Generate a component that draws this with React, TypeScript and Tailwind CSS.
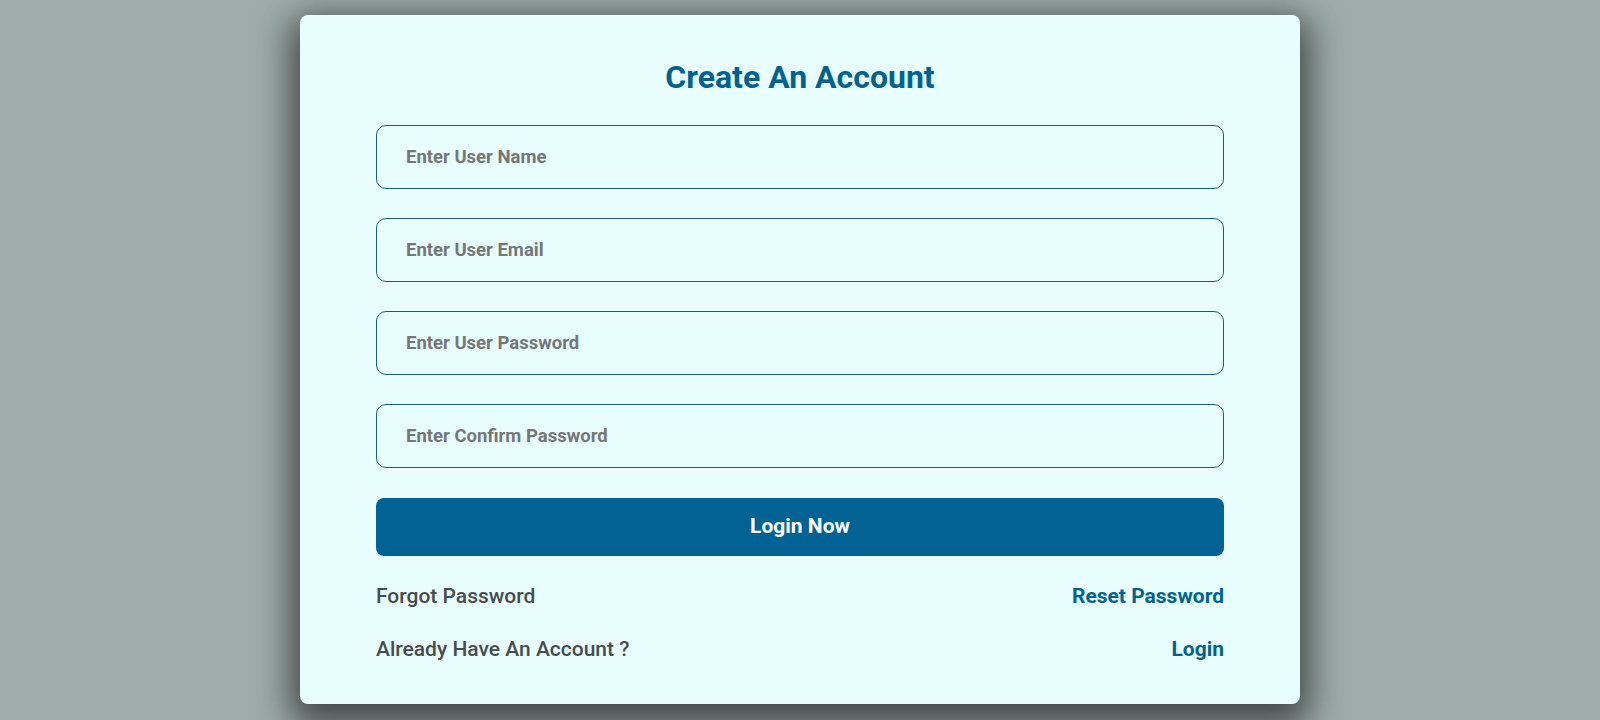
import React from 'react';

const fields = [
  'Enter User Name',
  'Enter User Email',
  'Enter User Password',
  'Enter Confirm Password',
];

const App = () => {
  return (
    <div className="min-h-screen bg-[#9eadaa] flex justify-center font-['Roboto',sans-serif]">
      <div className="w-[1000px] mt-[15px] mb-[16px] bg-[#e8fefe] rounded-[8px] shadow-[0_12px_35px_10px_rgba(40,40,40,0.75)] px-[76px] pt-[43px] pb-[43px]">
        <h1 className="text-[32px] leading-[38px] font-bold text-center text-[#02628f] mb-[29px]">
          Create An Account
        </h1>

        {fields.map((f) => (
          <input
            key={f}
            type="text"
            placeholder={f}
            className="block w-full h-[64px] mb-[29px] rounded-[10px] border border-[#1b5d76] bg-transparent px-[29px] text-[18.5px] font-bold text-[#555] placeholder:text-[#767676] outline-none"
          />
        ))}

        <button className="w-full h-[58px] mt-[1px] rounded-[8px] bg-[#026293] text-white text-[21px] font-bold">
          Login Now
        </button>

        <div className="flex justify-between items-center mt-[28px] text-[21px] leading-[24px]">
          <span className="text-[#474c4c] font-medium">Forgot Password</span>
          <a href="#" className="font-bold text-[#02628f]">Reset Password</a>
        </div>
        <div className="flex justify-between items-center mt-[29px] text-[21px] leading-[24px]">
          <span className="text-[#474c4c] font-medium">Already Have An Account ?</span>
          <a href="#" className="font-bold text-[#02628f]">Login</a>
        </div>
      </div>
    </div>
  );
};

export default App;
